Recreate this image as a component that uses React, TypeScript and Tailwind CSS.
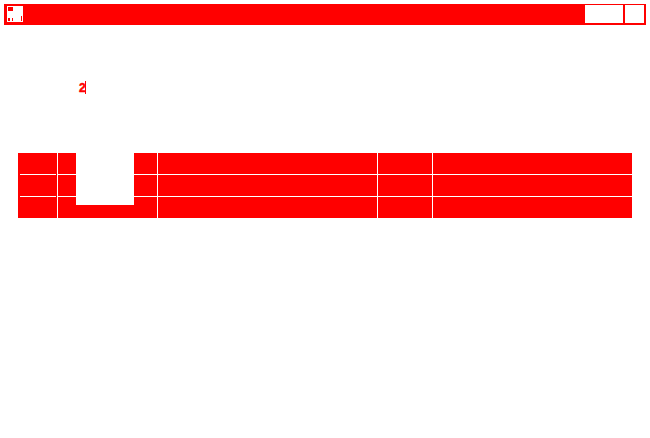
const columns = [39, 99, 219, 54, 199]

function AppIcon() {
  return (
    <svg width="16" height="16" viewBox="0 0 16 16" className="block bg-white" shapeRendering="crispEdges">
      <rect x="1" y="1" width="5" height="4" fill="#ff0000" />
      <rect x="1" y="12" width="2" height="3" fill="#ff0000" />
      <rect x="5" y="12" width="1" height="3" fill="#ff0000" />
      <rect x="14" y="10" width="1" height="5" fill="#ff0000" />
    </svg>
  )
}

export default function App() {
  return (
    <div className="h-[438px] bg-white font-['Liberation_Sans',sans-serif]">
      {/* Title bar */}
      <div className="pt-1 px-1">
        <div className="h-[21px] bg-[#ff0000] flex items-start pl-[3px] pr-[2px] pt-[2px]">
          <AppIcon />
          <div className="ml-auto flex gap-[2px] -mt-px">
            <button className="w-[38px] h-[18px] bg-white" />
            <button className="w-[19px] h-[18px] bg-white" />
          </div>
        </div>
      </div>

      {/* Input with caret */}
      <div className="mt-[56px] pl-[79px] h-[13px] flex items-center">
        <span className="w-[6px] pt-px text-[12px] leading-[13px] font-bold text-[#ff0000] [-webkit-text-stroke:0.5px_#ff0000]">2</span>
        <span className="w-px h-[13px] bg-[#ff0000]" />
      </div>

      {/* Table */}
      <div className="mt-[59px] ml-[18px] relative flex gap-px w-[614px]">
        {columns.map((width, col) => (
          <div key={col} className="flex flex-col bg-[#ff0000]" style={{ width }}>
            {[0, 1, 2].map((row) => (
              <div key={row}>
                {row > 0 && <div className={col === 0 ? 'h-px ml-[2px] mr-px bg-white' : 'h-px bg-white'} />}
                <div className="h-[21px]" />
              </div>
            ))}
          </div>
        ))}
        <div className="absolute left-[58px] top-0 w-[58px] h-[52px] bg-white" />
      </div>
    </div>
  )
}
